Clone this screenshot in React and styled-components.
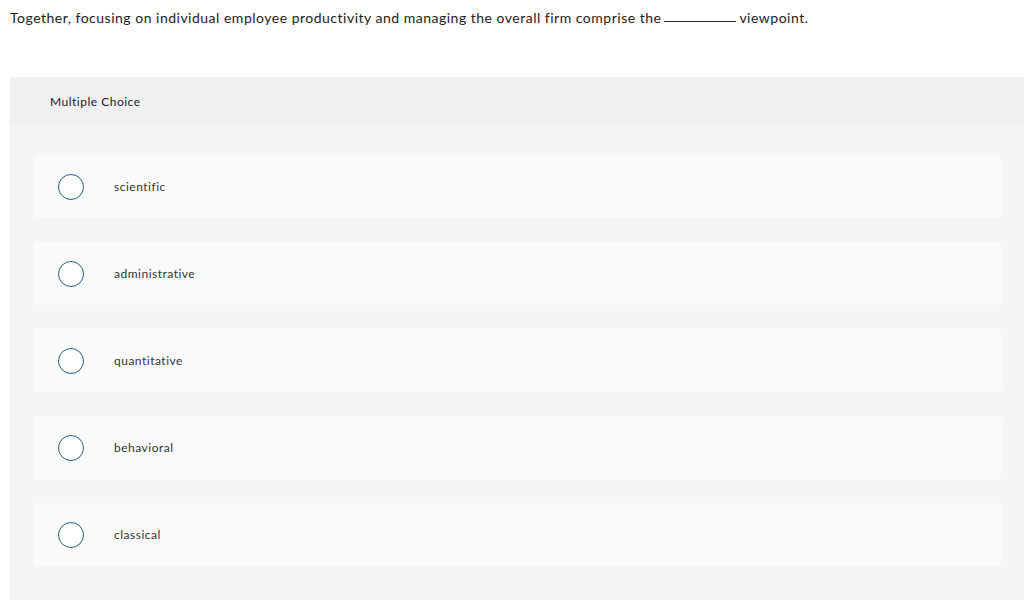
import React from 'react';
import styled, { createGlobalStyle } from 'styled-components';

const GlobalStyle = createGlobalStyle`
  html, body {
    margin: 0;
    padding: 0;
    background: #ffffff;
    overflow: hidden;
  }
  body {
    font-family: Lato, "Open Sans", "Liberation Sans", sans-serif;
    color: #333333;
    letter-spacing: 0.5px;
  }
`;

const Page = styled.div`
  width: 1024px;
  height: 600px;
  padding-top: 9px;
  box-sizing: border-box;
`;

const Question = styled.p`
  margin: 0 0 0 10px;
  font-size: 14px;
  line-height: 18px;
  color: #222222;
`;

const Blank = styled.span`
  display: inline-block;
  width: 72px;
  border-bottom: 1px solid #333333;
  margin: 0 3px;
  vertical-align: 1px;
`;

const Panel = styled.section`
  margin: 50px 0 0 10px;
  width: 1015px;
  background: #f5f5f5;
`;

const PanelHeader = styled.div`
  height: 48px;
  display: flex;
  align-items: center;
  padding-left: 40px;
  background: #f0f0f0;
  font-size: 12px;
  color: #222222;
`;

const Choices = styled.div`
  display: flex;
  flex-direction: column;
  gap: 24px;
  padding: 30px 24px 40px;
`;

const Choice = styled.label`
  height: 63px;
  display: flex;
  align-items: center;
  padding-left: 24px;
  background: #fafafa;
  border-radius: 3px;
  font-size: 12px;
  color: #333333;
  cursor: pointer;
`;

const Radio = styled.span`
  width: 26px;
  height: 26px;
  box-sizing: border-box;
  border: 1px solid #245d91;
  border-radius: 50%;
  background: #ffffff;
  margin-right: 30px;
  flex-shrink: 0;
`;

const options = ['scientific', 'administrative', 'quantitative', 'behavioral', 'classical'];

export default function App() {
  return (
    <Page>
      <GlobalStyle />
      <Question>
        Together, focusing on individual employee productivity and managing the overall firm comprise the
        <Blank />
        viewpoint.
      </Question>
      <Panel>
        <PanelHeader>Multiple Choice</PanelHeader>
        <Choices>
          {options.map((o) => (
            <Choice key={o}>
              <Radio />
              {o}
            </Choice>
          ))}
        </Choices>
      </Panel>
    </Page>
  );
}
